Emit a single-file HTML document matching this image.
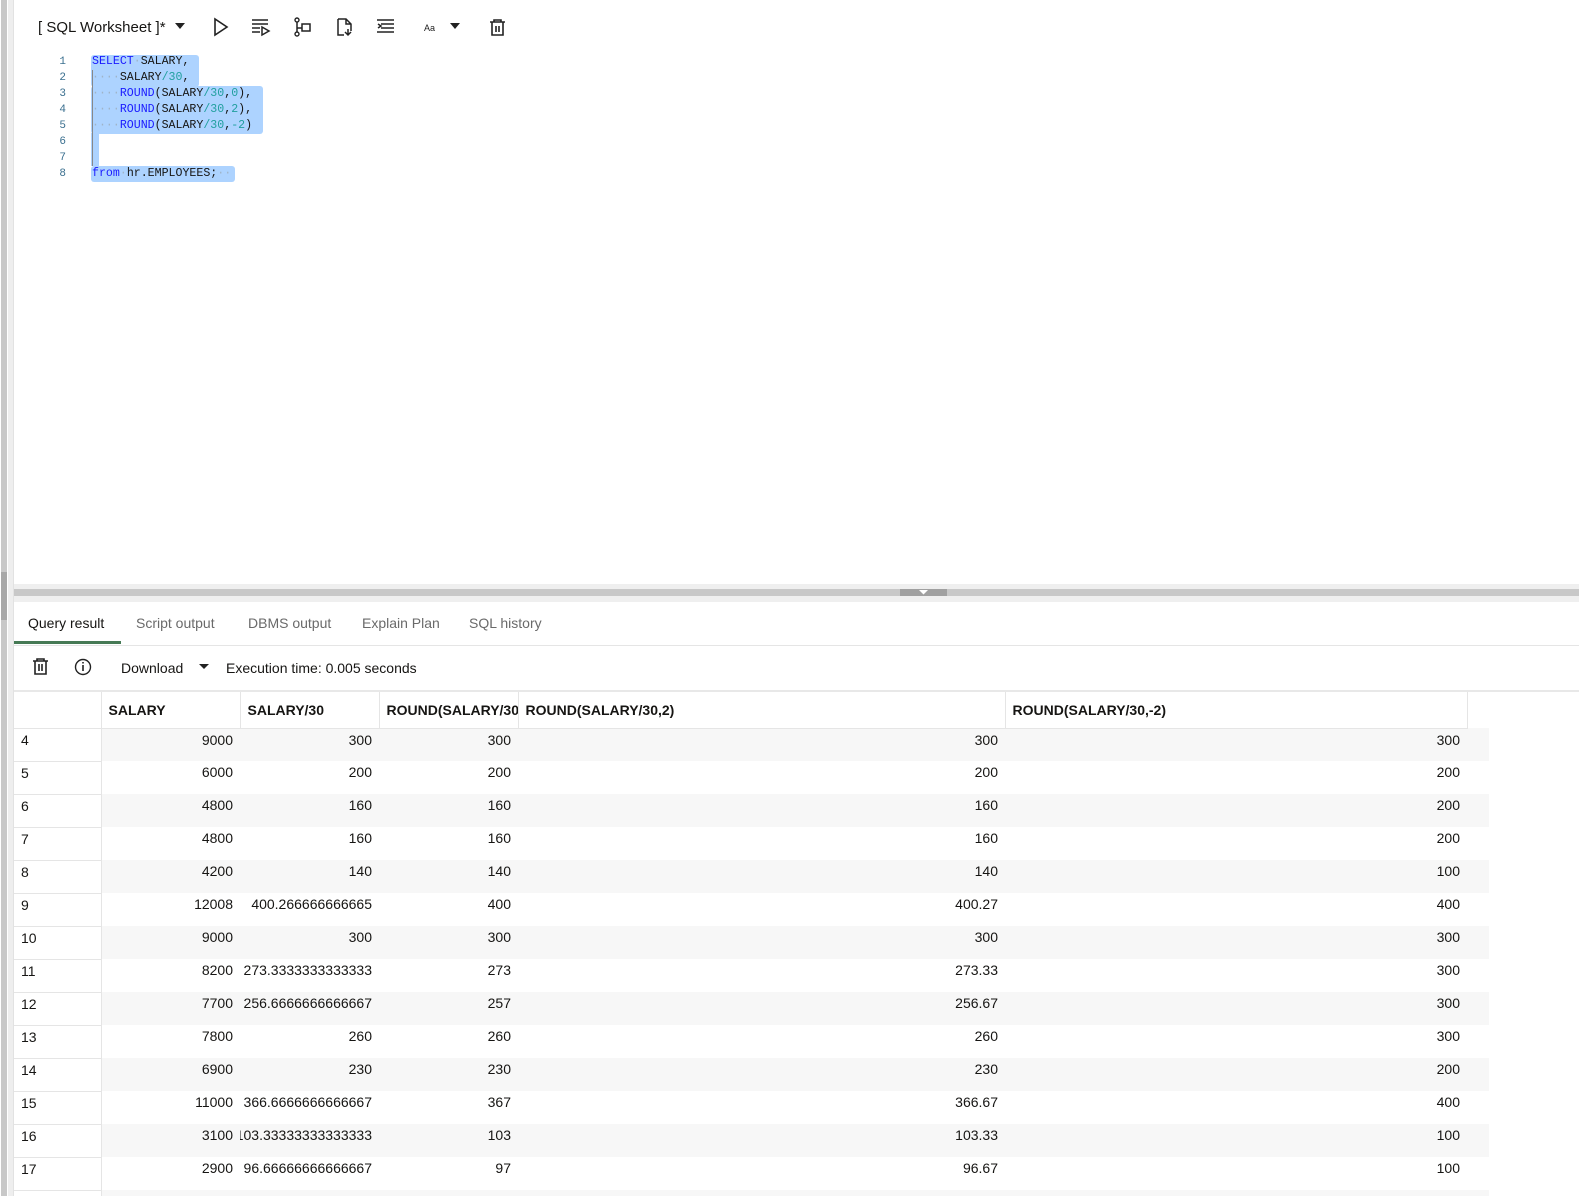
<!DOCTYPE html>
<html style="overflow:hidden;width:1579px;height:1196px"><head><meta charset="utf-8"><style>
*{margin:0;padding:0;box-sizing:border-box}
html,body{overflow:hidden}
body{width:1579px;height:1196px;background:#fff;font-family:"Liberation Sans",sans-serif;color:#161513;position:relative}
#wrap{position:absolute;left:0;top:0;width:1579px;height:1196px;overflow:hidden}
.abs{position:absolute}
.code{font-family:"Liberation Mono",monospace;font-size:11.6px;line-height:16px}
.sel{position:absolute;background:#add3ff;border-radius:3px}
.ln{position:absolute;left:50px;width:16px;text-align:right;color:#3a6f8f;font-family:"Liberation Mono",monospace;font-size:11px;line-height:16px}
.cl{position:absolute;left:92px;white-space:pre}
.k{color:#1a1aff}.n{color:#219f9f}.d{color:#9fb4c8}
.tab{position:absolute;top:615px;font-size:14px;color:#6a6a6a}
table{position:absolute;left:14px;top:692px;width:1475px;border-collapse:collapse;font-size:14px;table-layout:fixed}
td,th{height:33px;padding:0 7px;overflow:hidden;white-space:nowrap}
th{height:36px;text-align:left;font-weight:bold;border-right:1px solid #e5e5e5;border-bottom:1px solid #e5e5e5;vertical-align:middle}
td{text-align:right;vertical-align:top;line-height:22px;direction:rtl}
td.r{text-align:left;direction:ltr;background:#fff!important;border-bottom:1px solid #e5e5e5;border-right:1px solid #e5e5e5}
tr.s td{background:#f7f7f7}
</style></head><body><div id="wrap">
<div class="abs" style="left:1px;top:0;width:6px;height:1196px;background:#c8c8c8"></div>
<div class="abs" style="left:1px;top:572px;width:6px;height:48px;background:#a8a8a8"></div>
<div class="abs" style="left:8px;top:0;width:5px;height:1196px;background:#eeeeee"></div>
<div class="abs" style="left:13px;top:0;width:1px;height:1196px;background:#e2e2e2"></div>

<div class="abs" style="left:38px;top:19px;font-size:15px;">[ SQL Worksheet ]*</div>
<svg class="abs" style="left:0;top:0" width="520" height="45">
<path d="M175 23h10l-5 6z" fill="#222"/>
<path d="M215 19v16l12-8z" fill="none" stroke="#222" stroke-width="1.6"/>
<path d="M252 20h16M252 24h16M252 28h8M252 32h8M262 27v8l7-4z" fill="none" stroke="#222" stroke-width="1.5"/>
<circle cx="297" cy="20" r="2" fill="none" stroke="#222" stroke-width="1.4"/><circle cx="297" cy="34" r="2" fill="none" stroke="#222" stroke-width="1.4"/>
<path d="M297 22v10M297 28h5M302 24h8v7h-8z" fill="none" stroke="#222" stroke-width="1.5"/>
<path d="M338 19h8l5 5v7M338 19v16h6M351 24h-5v-5M348 29v6M345 32l3 3 3-3" fill="none" stroke="#222" stroke-width="1.5"/>
<path d="M377 20h17M381 24h13M381 28h13M377 32h17M378 24l3 2-3 2" fill="none" stroke="#222" stroke-width="1.5"/>
<text x="424" y="31" font-size="9" font-family="Liberation Sans" fill="#222">Aa</text>
<path d="M450 23h10l-5 6z" fill="#222"/>
<path d="M490 22h15M494 22v-2h7v2M492 22v13h11V22M496 26v6M499 26v6" fill="none" stroke="#222" stroke-width="1.6"/>
</svg>

<div class="sel" style="left:91px;top:55px;width:108px;height:32px"></div>
<div class="sel" style="left:91px;top:86px;width:172px;height:48px"></div>
<div class="sel" style="left:91px;top:133px;width:8px;height:33px;border-radius:0"></div>
<div class="sel" style="left:91px;top:166px;width:144px;height:16px"></div>
<div class="abs" style="left:92px;top:70px;width:1px;height:96px;background:#888"></div>
<div class="code">
<div class="ln" style="top:54px">1</div><div class="ln" style="top:70px">2</div><div class="ln" style="top:86px">3</div><div class="ln" style="top:102px">4</div><div class="ln" style="top:118px">5</div><div class="ln" style="top:134px">6</div><div class="ln" style="top:150px">7</div><div class="ln" style="top:166px">8</div>
<div class="cl" style="top:54px"><span class="k">SELECT</span><span class="d">·</span>SALARY,</div>
<div class="cl" style="top:70px"><span class="d">····</span>SALARY<span class="n">/30</span>,</div>
<div class="cl" style="top:86px"><span class="d">····</span><span class="k">ROUND</span>(SALARY<span class="n">/30</span>,<span class="n">0</span>),</div>
<div class="cl" style="top:102px"><span class="d">····</span><span class="k">ROUND</span>(SALARY<span class="n">/30</span>,<span class="n">2</span>),</div>
<div class="cl" style="top:118px"><span class="d">····</span><span class="k">ROUND</span>(SALARY<span class="n">/30</span>,<span class="n">-2</span>)</div>
<div class="cl" style="top:166px"><span class="k">from</span><span class="d">·</span>hr.EMPLOYEES;<span class="d">··</span></div>
</div>

<div class="abs" style="left:14px;top:584px;width:1565px;height:18px;background:#efefef"></div>
<div class="abs" style="left:14px;top:589px;width:1565px;height:7px;background:#c8c8c8"></div>
<div class="abs" style="left:900px;top:589px;width:47px;height:7px;background:#a0a0a0"></div>
<svg class="abs" style="left:919px;top:590px" width="9" height="5"><path d="M0 0h9l-4.5 4.5z" fill="#fff"/></svg>

<div class="tab" style="left:28px;color:#161513">Query result</div>
<div class="tab" style="left:136px">Script output</div>
<div class="tab" style="left:248px">DBMS output</div>
<div class="tab" style="left:362px">Explain Plan</div>
<div class="tab" style="left:469px">SQL history</div>
<div class="abs" style="left:14px;top:641px;width:107px;height:3px;background:#467a55"></div>
<div class="abs" style="left:14px;top:645px;width:1565px;height:1px;background:#e5e5e5"></div>

<svg class="abs" style="left:28px;top:656px" width="70" height="24">
<path d="M5 5h15M9 5v-2h7v2M7 5v13h11V5M11 8v7M14 8v7" fill="none" stroke="#222" stroke-width="1.6"/>
<circle cx="55" cy="11" r="7.5" fill="none" stroke="#222" stroke-width="1.4"/><path d="M55 9v6M55 6v1.5" stroke="#222" stroke-width="1.6"/>
</svg>
<div class="abs" style="left:121px;top:660px;font-size:14px">Download</div>
<svg class="abs" style="left:199px;top:664px" width="11" height="7"><path d="M0 0h10l-5 5z" fill="#222"/></svg>
<div class="abs" style="left:226px;top:660px;font-size:14px">Execution time: 0.005 seconds</div>
<div class="abs" style="left:14px;top:690px;width:1565px;height:2px;background:#e8e8e8"></div>

<table>
<colgroup><col style="width:87px"><col style="width:139px"><col style="width:139px"><col style="width:139px"><col style="width:487px"><col style="width:462px"><col style="width:22px"></colgroup>
<tr><th></th><th>SALARY</th><th>SALARY/30</th><th>ROUND(SALARY/30,0)</th><th>ROUND(SALARY/30,2)</th><th>ROUND(SALARY/30,-2)</th><th style="border:none"></th></tr>
<tr class="s"><td class="r">4</td><td>9000</td><td>300</td><td>300</td><td>300</td><td>300</td><td></td></tr>
<tr><td class="r">5</td><td>6000</td><td>200</td><td>200</td><td>200</td><td>200</td><td></td></tr>
<tr class="s"><td class="r">6</td><td>4800</td><td>160</td><td>160</td><td>160</td><td>200</td><td></td></tr>
<tr><td class="r">7</td><td>4800</td><td>160</td><td>160</td><td>160</td><td>200</td><td></td></tr>
<tr class="s"><td class="r">8</td><td>4200</td><td>140</td><td>140</td><td>140</td><td>100</td><td></td></tr>
<tr><td class="r">9</td><td>12008</td><td>400.266666666665</td><td>400</td><td>400.27</td><td>400</td><td></td></tr>
<tr class="s"><td class="r">10</td><td>9000</td><td>300</td><td>300</td><td>300</td><td>300</td><td></td></tr>
<tr><td class="r">11</td><td>8200</td><td>273.3333333333333</td><td>273</td><td>273.33</td><td>300</td><td></td></tr>
<tr class="s"><td class="r">12</td><td>7700</td><td>256.6666666666667</td><td>257</td><td>256.67</td><td>300</td><td></td></tr>
<tr><td class="r">13</td><td>7800</td><td>260</td><td>260</td><td>260</td><td>300</td><td></td></tr>
<tr class="s"><td class="r">14</td><td>6900</td><td>230</td><td>230</td><td>230</td><td>200</td><td></td></tr>
<tr><td class="r">15</td><td>11000</td><td>366.6666666666667</td><td>367</td><td>366.67</td><td>400</td><td></td></tr>
<tr class="s"><td class="r">16</td><td>3100</td><td>103.33333333333333</td><td>103</td><td>103.33</td><td>100</td><td></td></tr>
<tr><td class="r">17</td><td>2900</td><td>96.66666666666667</td><td>97</td><td>96.67</td><td>100</td><td></td></tr>
<tr class="s"><td class="r"></td><td></td><td></td><td></td><td></td><td></td><td></td></tr>
</table>
</div></body></html>
